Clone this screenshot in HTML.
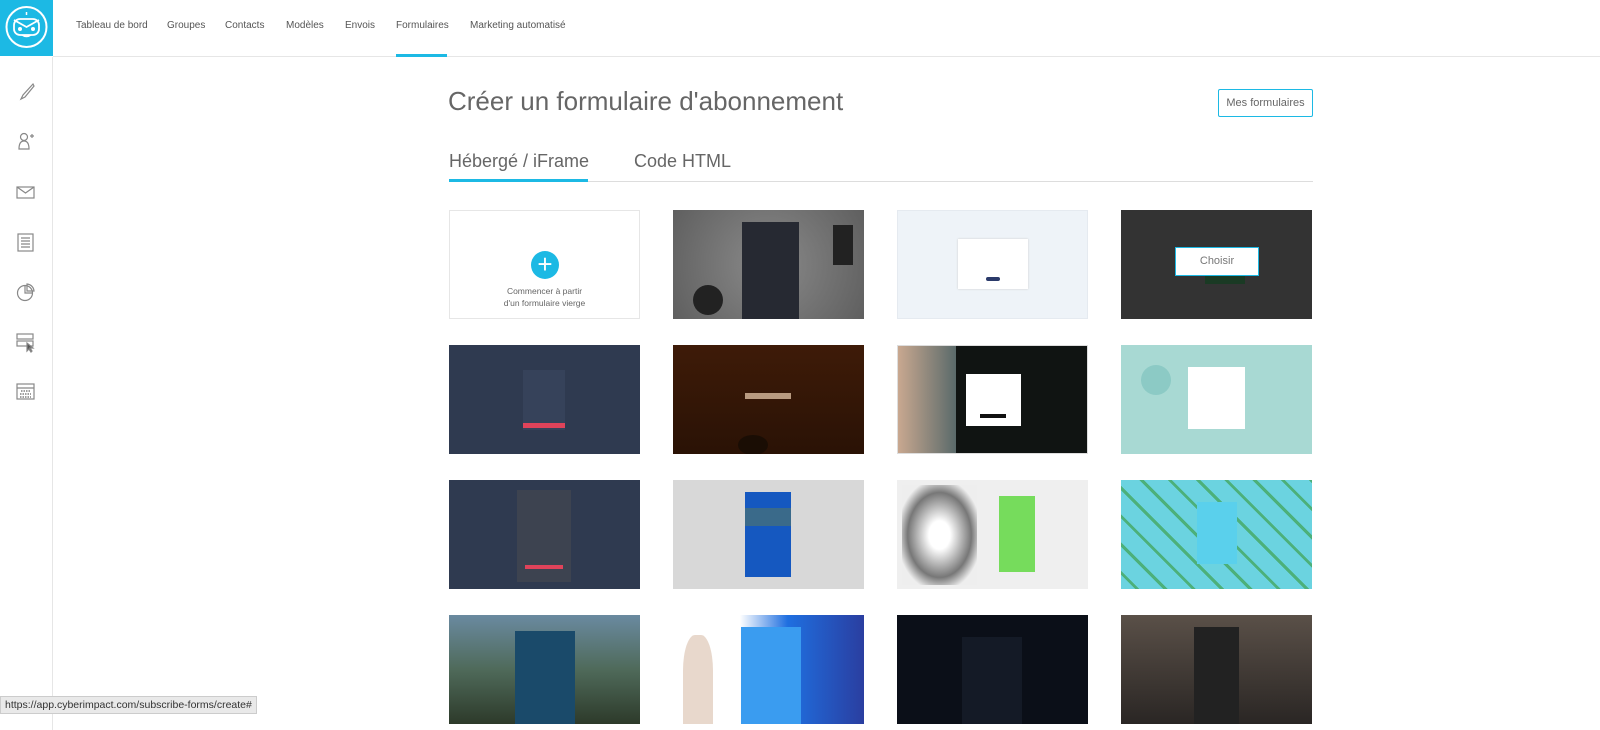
<!DOCTYPE html>
<html><head><meta charset="utf-8"><style>
*{margin:0;padding:0;box-sizing:border-box}
body{width:1600px;height:730px;overflow:hidden;background:#fff;font-family:"Liberation Sans",sans-serif;position:relative;color:#555}
.logo{position:absolute;left:0;top:0;width:53px;height:56px;background:#1cb9e4}
.nav{position:absolute;left:53px;top:0;right:0;height:57px;border-bottom:1px solid #e6e6e6}
.nav a{position:absolute;top:20px;font-size:10px;color:#555;text-decoration:none}
.side{position:absolute;left:0;top:57px;width:53px;height:673px;border-right:1px solid #e6e6e6}
.side svg{position:absolute;left:15px}
h1{position:absolute;left:448px;top:86px;font-weight:300;font-size:26px;color:#666}
.btn{position:absolute;left:1218px;top:89px;width:95px;height:28px;border:1px solid #1cb9e4;border-radius:2px;font-size:11px;color:#666;text-align:center;line-height:26px}
.tab{position:absolute;top:151px;font-size:18px;color:#666}
.line{position:absolute;left:449px;top:181px;width:864px;height:1px;background:#ddd}
.ul{position:absolute;left:449px;top:179px;width:139px;height:3px;background:#1cb9e4}
.c{position:absolute;width:191px;height:109px;overflow:hidden}
.f{position:absolute}
.status{position:absolute;left:0;top:696px;height:18px;background:#e9e9e9;border:1px solid #ccc;font-size:10.5px;line-height:16px;padding:0 4px;color:#333}
</style></head><body>
<div class="logo"><svg width="53" height="56" viewBox="0 0 53 56"><circle cx="26.5" cy="27" r="20" fill="none" stroke="#fff" stroke-width="2"/><rect x="14" y="19" width="25" height="16" rx="6" fill="none" stroke="#fff" stroke-width="1.8"/><path d="M14 20 L26.5 27 L39 20" fill="none" stroke="#fff" stroke-width="1.8"/><circle cx="20" cy="29" r="2" fill="#fff"/><circle cx="33" cy="29" r="2" fill="#fff"/><path d="M22 35 q4.5 3 9 0" fill="none" stroke="#fff" stroke-width="1.5"/><line x1="26.5" y1="12" x2="26.5" y2="15" stroke="#fff" stroke-width="1.5"/></svg></div>
<div class="nav">
<a style="left:23px">Tableau de bord</a><a style="left:114px">Groupes</a><a style="left:172px">Contacts</a><a style="left:233px">Modèles</a><a style="left:292px">Envois</a><a style="left:343px">Formulaires</a><a style="left:417px">Marketing automatisé</a>
<div style="position:absolute;left:343px;top:54px;width:51px;height:3px;background:#1cb9e4"></div>
</div>
<div class="side">
<svg style="top:24px" width="22" height="22" viewBox="0 0 22 22" fill="none" stroke="#888" stroke-width="1.2"><path d="M18 3 L8 14 L6 18 L10 16 L19 5 Z"/></svg>
<svg style="top:74px" width="22" height="22" viewBox="0 0 22 22" fill="none" stroke="#888" stroke-width="1.2"><circle cx="9" cy="6" r="3.5"/><path d="M4 18 q0-8 5-8 q5 0 5 8 Z"/><path d="M15 5h4M17 3v4"/></svg>
<svg style="top:124px" width="22" height="22" viewBox="0 0 22 22" fill="none" stroke="#888" stroke-width="1.2"><rect x="2" y="6" width="17" height="11"/><path d="M2 6 L10.5 12 L19 6"/></svg>
<svg style="top:174px" width="22" height="22" viewBox="0 0 22 22" fill="none" stroke="#888" stroke-width="1.2"><rect x="3" y="3" width="15" height="17"/><path d="M6 7h9M6 10h9M6 13h9M6 16h9"/></svg>
<svg style="top:224px" width="22" height="22" viewBox="0 0 22 22" fill="none" stroke="#888" stroke-width="1.2"><circle cx="10" cy="12" r="7.5"/><path d="M10 4.5 V12 H17.5"/><path d="M12 3 A7.5 7.5 0 0 1 19 10 H12 Z"/></svg>
<svg style="top:274px" width="22" height="22" viewBox="0 0 22 22" fill="none" stroke="#888" stroke-width="1.2"><rect x="2" y="3" width="16" height="5"/><rect x="2" y="10" width="16" height="5"/><path d="M12 12 L12 20 L14 18 L16 21 L17 20 L15 17 L18 17 Z" fill="#555"/></svg>
<svg style="top:324px" width="22" height="22" viewBox="0 0 22 22" fill="none" stroke="#888" stroke-width="1.2"><rect x="2" y="3" width="17" height="15"/><path d="M2 7h17"/><path d="M6 10h10M5 13h11M5 16h11" stroke="#666" stroke-dasharray="1.5 1"/></svg>
</div>
<h1>Créer un formulaire d'abonnement</h1>
<div class="btn">Mes formulaires</div>
<div class="tab" style="left:449px">Hébergé / iFrame</div>
<div class="tab" style="left:634px">Code HTML</div>
<div class="line"></div><div class="ul"></div>

<div class="c" style="left:449px;top:210px;border:1px solid #e6e6e6;background:#fff">
<div style="position:absolute;left:81px;top:40px;width:28px;height:28px;border-radius:50%;background:#1cb9e4;color:#fff;font-size:26px;line-height:27px;text-align:center">+</div>
<div style="position:absolute;left:0;width:189px;top:74px;text-align:center;font-size:8.5px;line-height:12px;color:#666">Commencer à partir<br>d'un formulaire vierge</div></div>
<div class="c" style="left:673px;top:210px;background:radial-gradient(circle at 50% 50%,#8a8a8a,#5f5f5f)"><div class="f" style="left:69px;top:12px;width:57px;height:97px;background:#262932"></div><div class="f" style="left:20px;top:75px;width:30px;height:30px;border-radius:50%;background:#222"></div><div class="f" style="left:160px;top:15px;width:20px;height:40px;background:#222"></div></div>
<div class="c" style="left:897px;top:210px;background:#eef3f8;border:1px solid #e5eaf0"><div class="f" style="left:60px;top:28px;width:70px;height:50px;background:#fff;box-shadow:0 0 2px #ccc"></div><div class="f" style="left:88px;top:66px;width:14px;height:4px;background:#2b3a6a;border-radius:2px"></div></div>
<div class="c" style="left:1121px;top:210px;background:#333"><div class="f" style="left:54px;top:37px;width:84px;height:29px;background:#fff;border:1px solid #1cb9e4;font-size:11px;color:#777;text-align:center;line-height:27px">Choisir</div><div class="f" style="left:84px;top:66px;width:40px;height:8px;background:#1a3a24"></div></div>
<div class="c" style="left:449px;top:345px;background:#2f3a50"><div class="f" style="left:74px;top:25px;width:42px;height:60px;background:#36425a"></div><div class="f" style="left:74px;top:78px;width:42px;height:5px;background:#e0435a"></div></div>
<div class="c" style="left:673px;top:345px;background:linear-gradient(#3e1b08,#2a1205)"><div class="f" style="left:72px;top:48px;width:46px;height:6px;background:#b89a80"></div><div class="f" style="left:65px;top:90px;width:30px;height:20px;border-radius:50%;background:#1a0d04"></div></div>
<div class="c" style="left:897px;top:345px;background:#101412;border:1px solid #ddd"><div class="f" style="left:0;top:0;width:58px;height:109px;background:linear-gradient(90deg,#c9a890,#5a6a6a)"></div><div class="f" style="left:68px;top:28px;width:55px;height:52px;background:#fff"></div><div class="f" style="left:82px;top:68px;width:26px;height:4px;background:#111"></div></div>
<div class="c" style="left:1121px;top:345px;background:#a8d9d3"><div class="f" style="left:67px;top:22px;width:57px;height:62px;background:#fff"></div><div class="f" style="left:20px;top:20px;width:30px;height:30px;border-radius:50%;background:#8ccac5"></div></div>
<div class="c" style="left:449px;top:480px;background:#2f3a50"><div class="f" style="left:68px;top:10px;width:54px;height:92px;background:#3d4350"></div><div class="f" style="left:76px;top:85px;width:38px;height:4px;background:#e0435a"></div></div>
<div class="c" style="left:673px;top:480px;background:#d8d8d8"><div class="f" style="left:72px;top:12px;width:46px;height:85px;background:#1558c0"></div><div class="f" style="left:72px;top:28px;width:46px;height:18px;background:#3a6a8a"></div></div>
<div class="c" style="left:897px;top:480px;background:#efefef"><div class="f" style="left:5px;top:5px;width:75px;height:100px;background:radial-gradient(#fff 20%,#777 60%,#eee 80%)"></div><div class="f" style="left:102px;top:16px;width:36px;height:76px;background:#76dc5c"></div></div>
<div class="c" style="left:1121px;top:480px;background:repeating-linear-gradient(45deg,#6bd3e0 0 10px,#4cb07a 10px 13px,#6bd3e0 13px 20px)"><div class="f" style="left:76px;top:22px;width:40px;height:62px;background:#5ad0ec"></div></div>
<div class="c" style="left:449px;top:615px;background:linear-gradient(#6a8aa0,#4f6a5a 50%,#2d3a2a)"><div class="f" style="left:66px;top:16px;width:60px;height:93px;background:#1a4a6a"></div></div>
<div class="c" style="left:673px;top:615px;background:linear-gradient(90deg,#fff 35%,#1f6fe0 60%,#2a3ea0)"><div class="f" style="left:68px;top:12px;width:60px;height:97px;background:#3a9cf0"></div><div class="f" style="left:10px;top:20px;width:30px;height:89px;background:#e8d8cc;border-radius:40% 40% 0 0"></div></div>
<div class="c" style="left:897px;top:615px;background:#0b0f18"><div class="f" style="left:65px;top:22px;width:60px;height:87px;background:#141a26"></div></div>
<div class="c" style="left:1121px;top:615px;background:linear-gradient(#5a5048,#2a2624)"><div class="f" style="left:73px;top:12px;width:45px;height:97px;background:#222"></div></div>
<div class="status">https://app.cyberimpact.com/subscribe-forms/create#</div>
</body></html>
